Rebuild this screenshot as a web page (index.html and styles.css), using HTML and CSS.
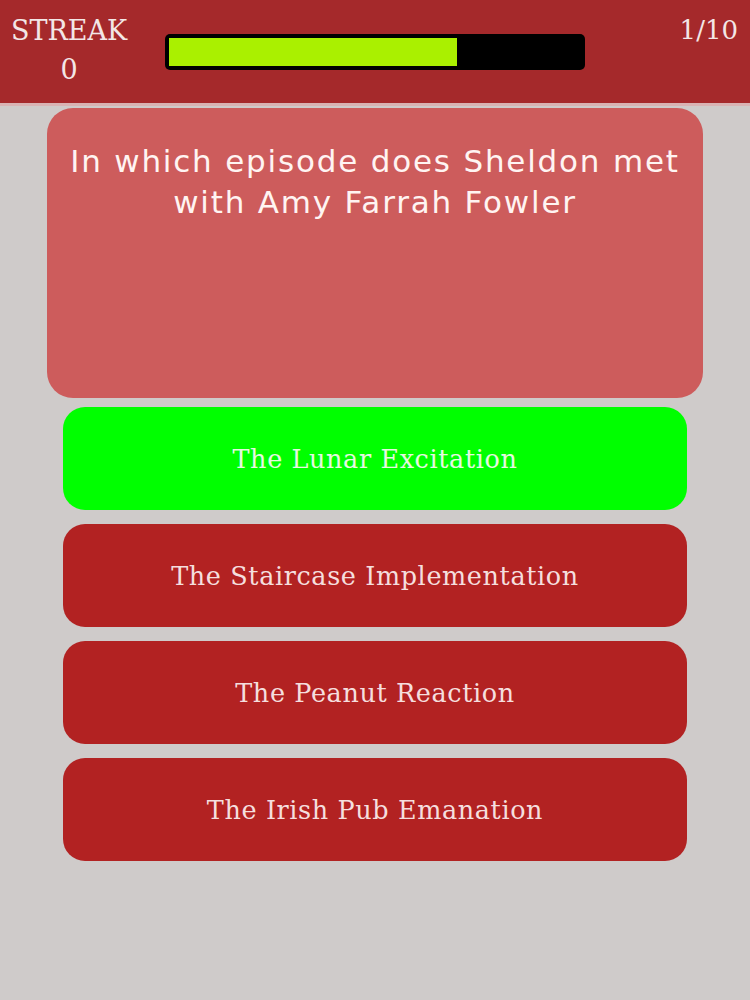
FILE: index.html
```html
<!DOCTYPE html>
<html lang="en">
<head>
  <meta charset="UTF-8">
  <meta name="viewport" content="width=device-width, initial-scale=1.0">
  <title>Quiz</title>
  <link rel="stylesheet" href="styles.css">
</head>
<body>

  <div class="top-bar">
    <div class="streak">
      <div>STREAK</div>
      <div>0</div>
    </div>
    <div class="progress">
      <div class="progress-fill" style="width: 70%;"></div>
    </div>
    <div class="counter">1/10</div>
  </div>

  <!-- Вопрос -->
  <div class="question-card">
    In which episode does Sheldon met with Amy Farrah Fowler
  </div>

  <!-- Ответы -->
  <div class="answers">
    <button class="answer correct">The Lunar Excitation</button>
    <button class="answer">The Staircase Implementation</button>
    <button class="answer">The Peanut Reaction</button>
    <button class="answer">The Irish Pub Emanation</button>
  </div>

</body>
</html>
```

FILE: styles.css
```css
body {
  margin: 0;
  padding: 0;
  background-color: #cfcbca;
  font-family: "DejaVu Serif", serif;
}

.top-bar {
  display: flex;
  align-items: flex-start;
  height: 103px;
  background-color: #a5292b;
  border-bottom: 3px solid #d9b3b3;
  color: #f3e6e6;
}

.streak {
  width: 118px;
  margin-left: 10px;
  padding-top: 11px;
  text-align: center;
  font-size: 27px;
  line-height: 39px;
}

.progress {
  width: 412px;
  height: 28px;
  margin: 34px 0 0 37px;
  padding: 4px;
  background-color: #000;
  border-radius: 5px;
}

.progress-fill {
  height: 100%;
  background-color: #aaf000;
}

.counter {
  margin-left: auto;
  margin-right: 12px;
  padding-top: 11px;
  font-size: 26px;
  line-height: 39px;
}

.question-card {
  margin: 2px 47px 0;
  height: 257px;
  padding: 33px 16px 0;
  background-color: #cd5c5c;
  border-radius: 26px;
  color: #fff4f2;
  font-family: "DejaVu Sans", sans-serif;
  font-size: 31px;
  line-height: 41px;
  letter-spacing: 1.8px;
  text-align: center;
}

.answers {
  display: flex;
  flex-direction: column;
  gap: 14px;
  margin: 9px 63px 0;
}

.answer {
  height: 103px;
  border: none;
  border-radius: 22px;
  background-color: #b22222;
  color: #f5dede;
  font-family: "DejaVu Serif", serif;
  font-size: 25.5px;
  letter-spacing: 0.6px;
}

.answer.correct {
  background-color: #00ff00;
  color: #e6f8e0;
}
```
